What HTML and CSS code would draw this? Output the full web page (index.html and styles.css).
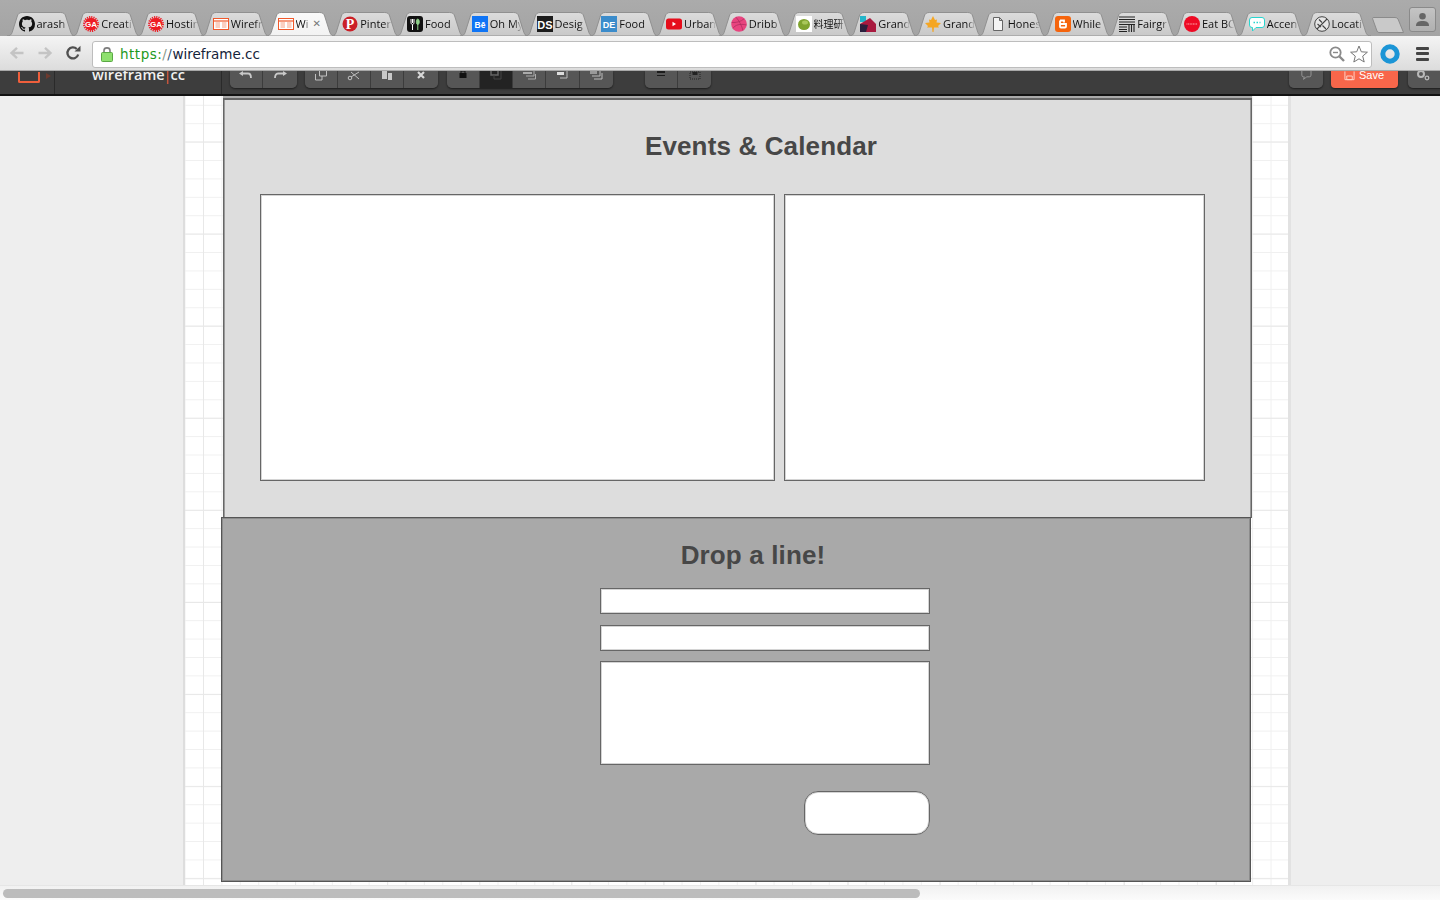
FILE: index.html
```html
<!DOCTYPE html>
<html lang="en">
<head>
<meta charset="utf-8">
<title>Wireframe.cc</title>
<link rel="stylesheet" href="styles.css">
</head>
<body>
<svg class="defs" width="0" height="0" aria-hidden="true">
  <linearGradient id="tabg" x1="0" y1="0" x2="0" y2="1"><stop offset="0" stop-color="#dcdcdc"/><stop offset="1" stop-color="#c8c8c8"/></linearGradient>
  <linearGradient id="taba" x1="0" y1="0" x2="0" y2="1"><stop offset="0" stop-color="#fafafa"/><stop offset="1" stop-color="#f2f2f2"/></linearGradient>
  <symbol id="tabshape" viewBox="0 0 70 24" preserveAspectRatio="none">
    <path d="M0 24C3 24 4.500 22.500 5.200 20.500L10.500 4C11.300 1.500 13 .5 15.500 .5H54.500C57 .5 58.700 1.500 59.500 4L64.800 20.500C65.500 22.500 67 24 70 24Z"/>
  </symbol>
  <symbol id="wf" viewBox="0 0 16 16">
    <rect x=".5" y="2.500" width="15" height="11" fill="#fff" stroke="#f0592b"/>
    <path d="M1 5H15" stroke="#f0592b" stroke-width="1.200"/>
    <path d="M2.500 7H7M2.500 9H7M2.500 11H7M9 7H13.500M9 9H13.500M9 11H13.500" stroke="#f5a084"/>
  </symbol>
</svg>

<header class="tabstrip">
  <div class="tab"><svg class="tab-bg"><use href="#tabshape" fill="url(#tabg)"/></svg>
    <svg class="fav" viewBox="0 0 16 16"><path fill="#111" d="M8 0C3.580 0 0 3.580 0 8c0 3.540 2.290 6.530 5.470 7.590.4.070.55-.17.55-.38 0-.19-.01-.82-.01-1.490-2.010.37-2.530-.49-2.690-.94-.09-.23-.48-.94-.82-1.130-.28-.15-.68-.52-.01-.53.63-.01 1.080.58 1.230.82.720 1.210 1.870.87 2.330.66.070-.52.28-.87.51-1.070-1.780-.2-3.640-.89-3.640-3.950 0-.87.31-1.590.82-2.150-.08-.2-.36-1.020.08-2.120 0 0 .67-.21 2.200.82.64-.18 1.320-.27 2-.27s1.360.09 2 .27c1.530-1.040 2.200-.82 2.200-.82.44 1.100.16 1.920.08 2.120.51.56.82 1.270.82 2.150 0 3.070-1.870 3.750-3.650 3.950.29.25.54.73.54 1.480 0 1.070-.01 1.930-.01 2.200 0 .21.15.46.55.38A8.013 8.013 0 0016 8c0-4.420-3.580-8-8-8z"/></svg>
    <span class="label">arash</span></div>
  <div class="tab"><svg class="tab-bg"><use href="#tabshape" fill="url(#tabg)"/></svg>
    <svg class="fav" viewBox="0 0 16 16"><circle cx="8" cy="8" r="6.300" fill="#ee1c25"/><circle cx="8" cy="8" r="7" fill="none" stroke="#ee1c25" stroke-width="2" stroke-dasharray="1.200 1"/><text x="8" y="10.900" class="ico-t ga-t">GA</text></svg>
    <span class="label">Creati</span></div>
  <div class="tab"><svg class="tab-bg"><use href="#tabshape" fill="url(#tabg)"/></svg>
    <svg class="fav" viewBox="0 0 16 16"><circle cx="8" cy="8" r="6.300" fill="#ee1c25"/><circle cx="8" cy="8" r="7" fill="none" stroke="#ee1c25" stroke-width="2" stroke-dasharray="1.200 1"/><text x="8" y="10.900" class="ico-t ga-t">GA</text></svg>
    <span class="label">Hostin</span></div>
  <div class="tab"><svg class="tab-bg"><use href="#tabshape" fill="url(#tabg)"/></svg><svg class="fav"><use href="#wf"/></svg><span class="label">Wirefr</span></div>
  <div class="tab tab-active"><svg class="tab-bg"><use href="#tabshape" fill="url(#taba)"/></svg><svg class="fav"><use href="#wf"/></svg><span class="label label-short">Wi</span><span class="close">✕</span></div>
  <div class="tab"><svg class="tab-bg"><use href="#tabshape" fill="url(#tabg)"/></svg>
    <svg class="fav" viewBox="0 0 16 16"><circle cx="8" cy="8" r="7.500" fill="#cb1f27"/><text x="8" y="12.600" class="ico-t pin-t">P</text></svg>
    <span class="label">Pinter</span></div>
  <div class="tab"><svg class="tab-bg"><use href="#tabshape" fill="url(#tabg)"/></svg>
    <svg class="fav" viewBox="0 0 16 16"><rect width="16" height="16" rx="3" fill="#111"/><path d="M4 3V6.500C4 8 5 8.500 5.500 8.500V14M5.500 3V7M7 3V6.500C7 8 6 8.500 5.500 8.500" stroke="#fff" fill="none"/><path d="M10.800 8.500C9.500 8.500 9.200 6.500 9.400 5.200 9.600 3.800 10.200 3 10.800 3S12 3.800 12.200 5.200C12.400 6.500 12 8.500 10.800 8.500ZM10.800 8V14" stroke="#8fd18a" fill="#8fd18a"/></svg>
    <span class="label">Food</span></div>
  <div class="tab"><svg class="tab-bg"><use href="#tabshape" fill="url(#tabg)"/></svg>
    <svg class="fav" viewBox="0 0 16 16"><rect width="16" height="16" fill="#0f74f5"/><text x="8" y="11.700" class="ico-t be-t">Bē</text></svg>
    <span class="label">Oh My</span></div>
  <div class="tab"><svg class="tab-bg"><use href="#tabshape" fill="url(#tabg)"/></svg>
    <svg class="fav" viewBox="0 0 16 16"><rect width="16" height="16" fill="#1c1c1c"/><text x="8" y="12.500" class="ico-t ds-t">DS</text></svg>
    <span class="label">Desig</span></div>
  <div class="tab"><svg class="tab-bg"><use href="#tabshape" fill="url(#tabg)"/></svg>
    <svg class="fav" viewBox="0 0 16 16"><rect width="16" height="16" fill="#3b8ccb"/><text x="8" y="11.800" class="ico-t de-t">DE</text></svg>
    <span class="label">Food</span></div>
  <div class="tab"><svg class="tab-bg"><use href="#tabshape" fill="url(#tabg)"/></svg>
    <svg class="fav" viewBox="0 0 16 16"><rect y="2.500" width="16" height="11" rx="2.500" fill="#e60d1b"/><path d="M6.500 5.800V10.200L10 8Z" fill="#fff"/></svg>
    <span class="label">Urban</span></div>
  <div class="tab"><svg class="tab-bg"><use href="#tabshape" fill="url(#tabg)"/></svg>
    <svg class="fav" viewBox="0 0 16 16"><circle cx="8" cy="8" r="7.800" fill="#e8447f"/><path d="M5 1.200C8 4.500 11 10 12 14.800M.6 6.500C5 6.800 10 5.800 13 2.800M1.800 12.500C4 9 9 7.300 15.600 9" fill="none" stroke="#a92a5c" stroke-width=".7"/></svg>
    <span class="label">Dribb</span></div>
  <div class="tab"><svg class="tab-bg"><use href="#tabshape" fill="url(#tabg)"/></svg>
    <svg class="fav" viewBox="0 0 16 16"><rect width="16" height="16" fill="#fff"/><ellipse cx="8" cy="8.500" rx="6" ry="5.500" fill="#7fa32e"/><ellipse cx="9" cy="6.500" rx="3" ry="2" fill="#a9c75a"/></svg>
    <span class="label label-cjk">料理研</span></div>
  <div class="tab"><svg class="tab-bg"><use href="#tabshape" fill="url(#tabg)"/></svg>
    <svg class="fav" viewBox="0 0 16 16"><path d="M0 0H6V6H0Z" fill="#23b5c9"/><path d="M0 8L10 2 16 8V16H0Z" fill="#a81a3f"/><path d="M0 8L8 9 6 16H0Z" fill="#2a1f3d"/></svg>
    <span class="label">Grand</span></div>
  <div class="tab"><svg class="tab-bg"><use href="#tabshape" fill="url(#tabg)"/></svg>
    <svg class="fav" viewBox="0 0 16 16"><path d="M8 0L10 4 12 3.500 11.500 6.500 16 7 13 10 14 11.500 9 11.500 8.500 16H7.500L7 11.500 2 11.500 3 10 0 7 4.500 6.500 4 3.500 6 4Z" fill="#f5a623"/></svg>
    <span class="label">Grand</span></div>
  <div class="tab"><svg class="tab-bg"><use href="#tabshape" fill="url(#tabg)"/></svg>
    <svg class="fav" viewBox="0 0 16 16"><path d="M3.500 1.500H9.500L12.500 4.500V14.500H3.500ZM9.500 1.500V4.500H12.500" fill="#f4f4f4" stroke="#666"/></svg>
    <span class="label">Hones</span></div>
  <div class="tab"><svg class="tab-bg"><use href="#tabshape" fill="url(#tabg)"/></svg>
    <svg class="fav" viewBox="0 0 16 16"><rect width="16" height="16" rx="3" fill="#f5640c"/><path d="M5 4.500H9V6.500M5 4.500V10.500Q5 11.500 6 11.500H10Q11 11.500 11 10.500V8H5" fill="none" stroke="#fff" stroke-width="1.800"/></svg>
    <span class="label">While</span></div>
  <div class="tab"><svg class="tab-bg"><use href="#tabshape" fill="url(#tabg)"/></svg>
    <svg class="fav" viewBox="0 0 16 16"><path d="M0 1H16M0 3.500H16M0 6H16M0 8.500H16M0 11H8M0 13.500H8M0 15.500H8M10 8.500V16M12.500 8.500V16M15 8.500V16" stroke="#222" stroke-width="1.100"/></svg>
    <span class="label">Fairgr</span></div>
  <div class="tab"><svg class="tab-bg"><use href="#tabshape" fill="url(#tabg)"/></svg>
    <svg class="fav" viewBox="0 0 16 16"><circle cx="8" cy="8" r="8" fill="#ee0a24"/><path d="M2.500 8H13.500" stroke="#fbb" stroke-dasharray="1 .6"/></svg>
    <span class="label">Eat BC</span></div>
  <div class="tab"><svg class="tab-bg"><use href="#tabshape" fill="url(#tabg)"/></svg>
    <svg class="fav" viewBox="0 0 16 16"><path d="M3 1.500H13Q15.500 1.500 15.500 4V9Q15.500 11.500 13 11.500H7L3.500 15V11.500H3Q.5 11.500 .5 9V4Q.5 1.500 3 1.500Z" fill="#fff" stroke="#28d6d0"/><path d="M4.500 6.500H11.500" stroke="#28d6d0" stroke-width="1.500" stroke-dasharray="1.500 1.500"/></svg>
    <span class="label">Accen</span></div>
  <div class="tab"><svg class="tab-bg"><use href="#tabshape" fill="url(#tabg)"/></svg>
    <svg class="fav" viewBox="0 0 16 16"><circle cx="8" cy="8" r="7.300" fill="#e6e6e6" stroke="#444"/><path d="M3 13L13 3M5 3.500L8 6.500M8.500 9.500L12 13M3.500 8L7 11" stroke="#444" stroke-width="1.100"/></svg>
    <span class="label">Locati</span></div>
  <svg class="newtab" viewBox="0 0 32 16"><path d="M.5 1.500Q.5 .5 2 .5H23Q25 .5 26 2L31.500 15.500H7Q5.500 15.500 5 14Z" fill="#c9c9c9" stroke="#8b8b8b"/></svg>
  <div class="profile"><svg viewBox="0 0 16 16" width="15" height="15"><circle cx="8" cy="4.500" r="3.500" fill="#666"/><path d="M1 15C1 10.500 4 9.500 8 9.500S15 10.500 15 15Z" fill="#666"/></svg></div>
</header>

<nav class="toolbar">
  <svg class="nav-ico back" viewBox="0 0 16 16"><path d="M14.500 8H3M8 2.800L2.500 8 8 13.200" fill="none" stroke="#c4c4c4" stroke-width="2.400"/></svg>
  <svg class="nav-ico fwd" viewBox="0 0 16 16"><path d="M1.500 8H13M8 2.800L13.500 8 8 13.200" fill="none" stroke="#c4c4c4" stroke-width="2.400"/></svg>
  <svg class="nav-ico reload" viewBox="0 0 16 16"><path d="M13.200 9.500A5.500 5.500 0 1 1 11.800 4" fill="none" stroke="#505050" stroke-width="2.300"/><path d="M9.500 6.500H15.500V.8Z" fill="#505050"/></svg>
  <div class="omnibox">
    <svg class="lock" viewBox="0 0 12 16"><path d="M3 7V4.500C3 1 9 1 9 4.500V7" fill="none" stroke="#7d7d7d" stroke-width="1.600"/><rect x=".5" y="6.500" width="11" height="9" rx="1" fill="#8ee06f" stroke="#5aa845"/></svg>
    <span class="url"><span class="u-scheme"><span class="u-green">https:</span><span class="u-gray">/</span><span class="u-blue">/</span></span>wireframe.cc</span>
    <svg class="omni-ico" viewBox="0 0 16 16"><circle cx="6.500" cy="6.500" r="5.200" fill="none" stroke="#8a8a8a" stroke-width="1.800"/><path d="M4 6.500H9" stroke="#8a8a8a" stroke-width="1.400"/><path d="M10.500 10.500L15 15" stroke="#8a8a8a" stroke-width="2.400"/></svg>
    <svg class="omni-star" viewBox="0 0 18 18"><path d="M9 1L11.300 6.800 17.400 7.200 12.700 11.100 14.200 17 9 13.800 3.800 17 5.300 11.100 .6 7.200 6.700 6.800Z" fill="#fff" stroke="#777"/></svg>
  </div>
  <svg class="ext" viewBox="0 0 20 20"><circle cx="10" cy="10" r="7.200" fill="none" stroke="#1b95d6" stroke-width="5"/></svg>
  <div class="menu"><i></i><i></i><i></i></div>
</nav>

<div class="appbar">
  <div class="logo-cell"><span class="logo"></span><span class="logo-arrow"></span></div>
  <div class="brand-cell"><span class="brand">wireframe<b>|</b>cc</span></div>
  <div class="groups">
    <div class="group">
      <span class="btn"><svg viewBox="0 0 14 8"><path d="M3 1.500H9Q12 1.500 12 6" fill="none" stroke="#c8c8c8" stroke-width="1.800"/><path d="M0 1.500L4 -1V4Z" fill="#c8c8c8"/></svg></span>
      <span class="btn"><svg viewBox="0 0 14 8"><path d="M11 1.500H5Q2 1.500 2 6" fill="none" stroke="#c8c8c8" stroke-width="1.800"/><path d="M14 1.500L10 -1V4Z" fill="#c8c8c8"/></svg></span>
    </div>
    <div class="group group-copy">
      <span class="btn"><svg viewBox="0 0 14 10"><path d="M5.500 0V5H12.500V0M1.500 3V9H8V5" fill="none" stroke="#c0c0c0"/></svg></span>
      <span class="btn"><svg viewBox="0 0 14 10"><circle cx="3" cy="7" r="1.800" fill="none" stroke="#c0c0c0"/><path d="M4 6L12 1M4 1L12 8" stroke="#c0c0c0"/></svg></span>
      <span class="btn"><svg viewBox="0 0 14 10"><path d="M2 0H7V8H2ZM8 2H12V9H8Z" fill="#c8c8c8"/></svg></span>
      <span class="btn"><svg viewBox="0 0 14 10"><path d="M4 1L10 7M10 1L4 7" stroke="#d8d8d8" stroke-width="2.200"/></svg></span>
    </div>
    <div class="group group-layer">
      <span class="btn"><svg viewBox="0 0 14 10"><rect x="3.500" y="2" width="7" height="5" fill="#111"/><path d="M5 2V0H9V2" fill="none" stroke="#111"/></svg></span>
      <span class="btn btn-on"><svg viewBox="0 0 14 10"><path d="M2 0V4H9V0" fill="none" stroke="#666" stroke-width="1.500"/><path d="M5 4V8H12V0" fill="none" stroke="#444"/></svg></span>
      <span class="btn"><svg viewBox="0 0 14 10"><path d="M1 1H10V3H1Z" fill="#aaa"/><path d="M4 5H12V0M6 8H13.500V3" fill="none" stroke="#aaa"/></svg></span>
      <span class="btn"><svg viewBox="0 0 14 10"><path d="M2 1H9V4H2Z" fill="#ddd"/><path d="M5 7H12V0" fill="none" stroke="#bbb"/></svg></span>
      <span class="btn"><svg viewBox="0 0 14 10"><path d="M1 0H8V3H1Z" fill="#999"/><path d="M3 5H11V0M5 8H13V2" fill="none" stroke="#bbb"/></svg></span>
    </div>
    <div class="group group-align">
      <span class="btn"><svg viewBox="0 0 14 10"><path d="M3 0H11V2H3ZM3 4H11V5H3Z" fill="#1c1c1c"/></svg></span>
      <span class="btn"><svg viewBox="0 0 14 10"><rect x="2" y="1" width="10" height="7" fill="none" stroke="#222" stroke-dasharray="1 1"/><rect x="4.500" y="1" width="5" height="3" fill="#222"/></svg></span>
    </div>
    <div class="group group-comment">
      <span class="btn"><svg viewBox="0 0 14 12"><path d="M2 0V5Q2 7 4 7H5L4 10 8 7H11Q13 7 13 5V0" fill="none" stroke="#a0a0a0"/></svg></span>
    </div>
    <div class="save"><svg viewBox="0 0 12 10"><path d="M1 0V9H11V0M3 5H9V9H3Z" fill="none" stroke="#ffd9cf"/></svg><span>Save</span></div>
    <div class="group group-gear">
      <span class="btn"><svg viewBox="0 0 14 10"><circle cx="5" cy="3" r="3" fill="none" stroke="#b8b8b8" stroke-width="2"/><circle cx="11" cy="7" r="1.800" fill="none" stroke="#b8b8b8" stroke-width="1.300"/></svg></span>
    </div>
  </div>
</div>

<main class="stage">
  <div class="gutter"></div>
  <div class="sheet">
    <section class="wf events"></section>
    <h2 class="wf-title title-events">Events &amp; Calendar</h2>
    <div class="wf box cal-left"></div>
    <div class="wf box cal-right"></div>
    <section class="wf contact"></section>
    <h2 class="wf-title title-contact">Drop a line!</h2>
    <div class="wf box field-name"></div>
    <div class="wf box field-mail"></div>
    <div class="wf box field-msg"></div>
    <div class="wf box send"></div>
  </div>
  <div class="gutter"></div>
</main>

<div class="hscroll"><div class="thumb"></div></div>
</body>
</html>
```
FILE: styles.css
```css
* { box-sizing: border-box; }
html, body { margin: 0; height: 100%; }
body {
  width: 1440px;
  height: 900px;
  overflow: hidden;
  display: flex;
  flex-direction: column;
  font-family: "DejaVu Sans", "Noto Sans CJK JP", sans-serif;
  background: #eee;
}
.defs { position: absolute; }

/* tab strip */
.tabstrip {
  height: 36px;
  flex: none;
  display: flex;
  align-items: flex-end;
  padding-left: 7px;
  background: linear-gradient(#ababab, #a4a4a4);
  position: relative;
}
.tab {
  position: relative;
  flex: none;
  width: 69px;
  height: 24px;
  margin-right: -4.25px;
  padding: 4px 0 0 11.500px;
  display: flex;
  align-items: flex-start;
  gap: 2px;
}
.tab-bg {
  position: absolute;
  inset: 0;
  width: 100%;
  height: 100%;
  stroke: #8f8f8f;
  stroke-width: 1px;
  overflow: visible;
}
.tab-active { z-index: 2; }
.fav {
  position: relative;
  flex: none;
  width: 16px;
  height: 16px;
}
.label {
  position: relative;
  flex: none;
  width: 32px;
  font-family: "Open Sans", "Noto Sans CJK JP", sans-serif;
  font-size: 11px;
  line-height: 16px;
  color: #111;
  white-space: nowrap;
  -webkit-mask-image: linear-gradient(90deg, #000 75%, transparent 100%);
  mask-image: linear-gradient(90deg, #000 75%, transparent 100%);
}
.label-cjk { font-size: 10px; }
.label-short { width: 13px; }
.close {
  position: relative;
  margin-left: 2px;
  font-size: 10px;
  line-height: 16px;
  color: #777;
}
.newtab {
  flex: none;
  width: 32px;
  height: 16px;
  margin: 0 0 3px 5px;
}
.profile {
  flex: none;
  width: 27px;
  height: 25px;
  margin: 0 0 4px 5px;
  border: 1px solid #8a8a8a;
  border-radius: 3px;
  background: linear-gradient(#c4c4c4, #b0b0b0);
  display: flex;
  align-items: center;
  justify-content: center;
}

/* text for favicons */
.ico-t { text-anchor: middle; font-family: "Liberation Sans", sans-serif; font-weight: 700; fill: #fff; }
.ga-t { font-size: 8px; }
.pin-t { font-size: 14px; font-family: "Liberation Serif", serif; }
.be-t { font-size: 8.500px; }
.ds-t { font-size: 11px; font-family: "Liberation Sans Narrow", "Liberation Sans", sans-serif; }
.de-t { font-size: 9px; }

/* browser toolbar */
.toolbar {
  height: 35px;
  flex: none;
  display: flex;
  align-items: center;
  padding: 2px 0 0 9px;
  position: relative;
  z-index: 1;
  background: linear-gradient(#f4f4f4, #dcdcdc);
  border-bottom: 1px solid #a8a8a8;
}
.nav-ico { flex: none; width: 16px; height: 16px; margin-bottom: 2px; }
.fwd { margin-left: 12px; }
.reload { margin-left: 12px; }
.omnibox {
  flex: none;
  width: 1280px;
  height: 27px;
  margin-left: 11px;
  display: flex;
  align-items: center;
  padding: 0 3px 0 8px;
  background: #fff;
  border: 1px solid #bdbdbd;
  border-radius: 3px;
}
.lock { flex: none; width: 12px; height: 16px; }
.url {
  flex: 1;
  margin-left: 7px;
  font-size: 13.500px;
  color: #14233a;
  white-space: nowrap;
}
.u-scheme { letter-spacing: .5px; }
.u-green { color: #1e9a1e; }
.u-gray { color: #8a9a8a; }
.u-blue { color: #3a5a7a; }
.omni-ico { flex: none; width: 16px; height: 16px; }
.omni-star { flex: none; width: 18px; height: 18px; margin-left: 5px; }
.ext { flex: none; width: 20px; height: 20px; margin-left: 8px; margin-bottom: 1px; }
.menu {
  flex: none;
  width: 13px;
  margin-left: 16px;
  margin-bottom: 1px;
  display: flex;
  flex-direction: column;
  gap: 2.500px;
}
.menu i { display: block; height: 3px; background: #444; border-radius: 1px; }

/* app bar (scrolled under the browser toolbar) */
.appbar {
  height: 25px;
  flex: none;
  display: flex;
  overflow: hidden;
  background: #3d3d3d;
  border-bottom: 2px solid #121212;
}
.logo-cell {
  flex: none;
  width: 55px;
  height: 23px;
  padding-left: 18px;
  border-right: 1px solid #2a2a2a;
  display: flex;
  gap: 6px;
  align-items: flex-start;
}
.logo {
  width: 22px;
  height: 11px;
  margin-top: 1px;
  border: 2px solid #ef5f3c;
  border-top: 0;
  border-radius: 0 0 2px 2px;
}
.logo-arrow {
  margin-top: 2px;
  border-left: 5px solid #6d3a2e;
  border-top: 3px solid transparent;
  border-bottom: 3px solid transparent;
}
.brand-cell {
  flex: none;
  width: 167px;
  height: 23px;
  padding-left: 37px;
  border-right: 1px solid #2a2a2a;
}
.brand {
  display: block;
  margin-top: -5px;
  font-family: "Open Sans", sans-serif;
  font-size: 14.500px;
  font-weight: 600;
  line-height: 18px;
  color: #f0f0f0;
  white-space: nowrap;
}
.brand b { font-weight: 400; color: #ef5f3c; margin: 0 -1px; }
.groups {
  flex: 1;
  display: flex;
  align-items: flex-start;
  padding-left: 8px;
  min-width: 0;
}
.group {
  flex: none;
  display: flex;
  height: 17px;
  border-radius: 0 0 5px 5px;
  box-shadow: 0 1px 2px #1c1c1c;
  overflow: hidden;
}
.btn {
  width: 33.250px;
  height: 17px;
  background: #565656;
  border-right: 1px solid #3c3c3c;
  display: flex;
  justify-content: center;
  align-items: flex-start;
}
.btn:last-child { border-right: 0; }
.btn svg { width: 14px; height: 10px; }
.btn-on { background: #232323; }
.group-copy { margin-left: 8px; }
.group-layer { margin-left: 9px; }
.group-align { margin-left: 32px; }
.group-comment { margin-left: 578px; }
.save {
  flex: none;
  width: 67px;
  height: 17px;
  margin-left: 8px;
  background: #f8664a;
  border-radius: 0 0 4px 4px;
  box-shadow: 0 1px 2px #1c1c1c;
  display: flex;
  justify-content: center;
  gap: 4px;
  color: #fff;
  font-family: "Liberation Sans", sans-serif;
  font-size: 11px;
  line-height: 9px;
}
.save svg { width: 11px; height: 10px; }
.group-gear { margin-left: 10px; width: 40px; }
.group-gear .btn { width: 40px; justify-content: flex-start; padding-left: 8px; }

/* canvas */
.stage {
  flex: none;
  height: 789px;
  display: flex;
}
.gutter { flex: 1; background: #eeeeee; }
.stage .gutter:first-child { flex: none; width: 183px; }
.sheet {
  position: relative;
  flex: none;
  width: 1108px;
  background-color: #fff;
  border-left: 2px solid #dddddd;
  border-right: 3px solid #e2e2e2;
  background-image:
    linear-gradient(#e8e8e8 1px, transparent 1px),
    linear-gradient(90deg, #e8e8e8 1px, transparent 1px),
    linear-gradient(#f0f0f0 1px, transparent 1px),
    linear-gradient(90deg, #f0f0f0 1px, transparent 1px);
  background-size: 92.100px 92.100px, 92.100px 92.100px, 18.420px 18.420px, 18.420px 18.420px;
  background-position: 0 45.500px, 18px 0, 0 8.800px, 18px 0;
}
.wf { position: absolute; }
.events {
  left: 38px;
  top: 2px;
  width: 1029px;
  height: 420px;
  background: #dddddd;
  border: 1px solid #666;
  border-top-width: 2px;
  box-shadow: 0 -2px 0 #aaa, inset 1px 0 0 #999, inset -1px 0 0 #999;
}
.contact {
  left: 36px;
  top: 421px;
  width: 1030px;
  height: 365px;
  background: #a9a9a9;
  border: 1px solid #555;
  box-shadow: inset 0 0 0 1px #8c8c8c;
}
.box { background: #fff; border: 1px solid #666; box-shadow: inset 0 0 0 1px #d4d4d4; }
.cal-left { left: 75px; top: 98px; width: 515px; height: 287px; }
.cal-right { left: 598.500px; top: 98px; width: 421.500px; height: 287px; }
.field-name { left: 415px; top: 492px; width: 330px; height: 26px; }
.field-mail { left: 415px; top: 529px; width: 330px; height: 26px; }
.field-msg { left: 415px; top: 565px; width: 330px; height: 104px; }
.send { left: 619px; top: 695px; width: 126px; height: 44px; border-radius: 14px; }
.wf-title {
  position: absolute;
  margin: 0;
  font-family: "Liberation Sans", Arial, sans-serif;
  font-size: 26px;
  line-height: 30px;
  font-weight: 700;
  letter-spacing: .14px;
  color: #474747;
  white-space: nowrap;
  text-align: center;
}
.title-events { left: 376px; top: 35px; width: 400px; }
.title-contact { left: 368px; top: 444px; width: 400px; }

/* horizontal scrollbar */
.hscroll {
  flex: 1;
  padding: 3px 0 0 3px;
  background: linear-gradient(#f1f1f1, #fbfbfb);
  border-top: 1px solid #e6e6e6;
}
.thumb { width: 917px; height: 9px; border-radius: 5px; background: #bcbcbc; }
```
